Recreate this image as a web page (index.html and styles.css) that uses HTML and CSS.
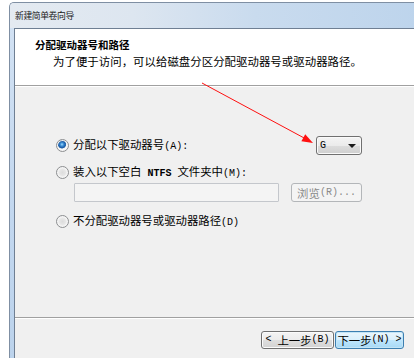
FILE: index.html
```html
<!DOCTYPE html>
<html lang="zh-CN">
<head>
<meta charset="utf-8">
<title>新建简单卷向导</title>
<link rel="stylesheet" href="styles.css">
</head>
<body>
<div class="window">
  <div class="titlebar"><span class="title-text">新建简单卷向导</span></div>
  <div class="client">
    <div class="header">
      <div class="h-title">分配驱动器号和路径</div>
      <div class="h-desc">为了便于访问，可以给磁盘分区分配驱动器号或驱动器路径。</div>
    </div>
    <div class="sep"></div>
    <div class="body">
      <div class="rows">
        <div class="row row1">
          <span class="radio checked"></span>
          <span class="label">分配以下驱动器号<span class="en">(A):</span></span>
          <div class="combo"><span class="combo-val">G</span><span class="combo-arrow"></span></div>
        </div>
        <div class="row row2">
          <span class="radio"></span>
          <span class="label">装入以下空白<span class="en"> <b>NTFS</b> </span>文件夹中<span class="en">(M):</span></span>
        </div>
        <div class="row row3">
          <div class="textbox"></div>
          <div class="btn disabled browse">浏览<span class="en">(R)...</span></div>
        </div>
        <div class="row row4">
          <span class="radio"></span>
          <span class="label">不分配驱动器号或驱动器路径<span class="en">(D)</span></span>
        </div>
      </div>
    </div>
    <div class="sep"></div>
    <div class="footer">
      <div class="btn back"><span class="en">&lt; </span>上一步<span class="en">(B)</span></div>
      <div class="btn next">下一步<span class="en">(N) &gt;</span></div>
    </div>
  </div>
</div>
<svg class="arrow" width="414" height="358" viewBox="0 0 414 358">
  <line x1="202" y1="83" x2="306" y2="139" stroke="#ff1010" stroke-width="1"/>
  <polygon points="313,143 301.4,141.3 305.2,134.3" fill="#ff1010"/>
</svg>
</body>
</html>
```
FILE: styles.css
```css
html, body {
  margin: 0;
  padding: 0;
  background: #ffffff;
  overflow: hidden;
  width: 414px;
  height: 358px;
}
body {
  position: relative;
  font-family: "Noto Sans CJK SC", "Noto Sans", sans-serif;
  color: #000;
}
.en {
  font-family: "Liberation Mono", "DejaVu Sans Mono", monospace;
  font-size: 10px;
  white-space: pre;
}
.window {
  box-sizing: border-box;
  margin: 2px 0 0 9px;
  width: 410px;
  height: 360px;
  border: 1px solid #7f8fa3;
  border-right: none;
  border-bottom: none;
  border-top-left-radius: 5px;
  background: linear-gradient(to bottom, #d4e3f4, #c2d7ef 60%, #bcd3ec);
  padding-left: 4px;
  display: flex;
  flex-direction: column;
}
.titlebar {
  height: 25px;
  margin-left: -4px;
  padding-left: 5px;
  display: flex;
  align-items: center;
  border-top-left-radius: 4px;
  background: linear-gradient(to right, #e4eaf1 0%, #dde6f0 30%, #c9dbee 60%, #bdd4ec 100%);
}
.title-text {
  font-size: 8.8px;
  line-height: 12px;
  color: #1a1a1a;
  letter-spacing: -0.4px;
}
.client {
  flex: 1;
  border-top: 1px solid #6f7f93;
  border-left: 1px solid #6f7f93;
  background: #f0f0f0;
  display: flex;
  flex-direction: column;
}
.header {
  background: #ffffff;
  height: 56px;
  box-sizing: border-box;
  padding: 8px 0 0 20px;
}
.h-title {
  font-size: 10.5px;
  font-weight: bold;
  line-height: 16px;
}
.h-desc {
  font-size: 11.4px;
  line-height: 16px;
  padding-left: 18px;
  letter-spacing: 0.05px;
}
.sep {
  height: 1px;
  background: #a0a0a0;
  border-bottom: 1px solid #ffffff;
}
.body {
  height: 230px;
  box-sizing: border-box;
  padding: 49px 0 0 41px;
}
.rows {
  width: 306px;
  display: flex;
  flex-direction: column;
}
.row {
  display: flex;
  align-items: center;
  font-size: 11.4px;
}
.row1 { height: 19px; }
.row2 { height: 16px; margin-top: 9px; }
.row3 { height: 19px; margin-top: 3px; padding-left: 18px; }
.row4 { height: 16px; margin-top: 11px; }
.radio {
  box-sizing: border-box;
  width: 13px;
  height: 13px;
  border-radius: 50%;
  border: 1px solid #8c8e90;
  background: radial-gradient(circle at 50% 50%, #dcdcdc 0, #e6e6e6 3px, #f6f6f6 5px, #ffffff 6px);
  box-shadow: inset 0 0 0 1px #f4f4f4;
  flex: none;
}
.radio.checked {
  background: radial-gradient(circle at 45% 40%, #a6dcff 0, #3d92d8 1.6px, #1f5da6 3.2px, #2a6db4 3.8px, #f2f2f2 4.4px, #ffffff 6px);
}
.label {
  margin-left: 4px;
  line-height: 16px;
  white-space: nowrap;
}
.label b {
  font-weight: bold;
}
.combo {
  margin-left: auto;
  box-sizing: border-box;
  width: 46px;
  height: 19px;
  border: 1px solid #707070;
  border-radius: 3px;
  background: linear-gradient(to bottom, #f4f4f4 0%, #ebebeb 50%, #dddddd 51%, #cfcfcf 100%);
  box-shadow: inset 0 0 0 1px #fafafa;
  display: flex;
  align-items: center;
  padding: 0 5px 0 3px;
}
.combo-val {
  font-family: "Liberation Mono", monospace;
  font-size: 10px;
  line-height: 12px;
}
.combo-arrow {
  margin-left: auto;
  width: 0;
  height: 0;
  border-left: 4px solid transparent;
  border-right: 4px solid transparent;
  border-top: 4px solid #1a1a1a;
}
.textbox {
  box-sizing: border-box;
  width: 205px;
  height: 19px;
  border: 1px solid #c4c7cc;
  border-radius: 1px;
  background: #f4f4f4;
}
.btn {
  box-sizing: border-box;
  height: 18px;
  border: 1px solid #707070;
  border-radius: 3px;
  background: linear-gradient(to bottom, #f4f4f4 0%, #ececec 50%, #dedede 51%, #d2d2d2 100%);
  box-shadow: inset 0 0 0 1px #fbfbfb;
  font-size: 11.4px;
  line-height: 16px;
  display: flex;
  align-items: center;
  justify-content: center;
  white-space: nowrap;
}
.btn.disabled {
  border-color: #b3b6b9;
  background: #f4f4f4;
  box-shadow: none;
  color: #8a8a8a;
}
.browse {
  margin-left: auto;
  width: 71px;
  height: 19px;
}
.footer {
  display: flex;
  justify-content: flex-end;
  gap: 1px;
  padding: 12px 15px 0 0;
}
.back { width: 73px; }
.next {
  width: 69px;
  border-color: #3c7fb1;
  background: linear-gradient(to bottom, #eaf6fd 0%, #d9f0fc 50%, #bee6fd 51%, #a7d9f5 100%);
  box-shadow: inset 0 0 0 1px #c4e5f6;
}
.arrow {
  position: absolute;
  left: 0;
  top: 0;
  pointer-events: none;
}
```
